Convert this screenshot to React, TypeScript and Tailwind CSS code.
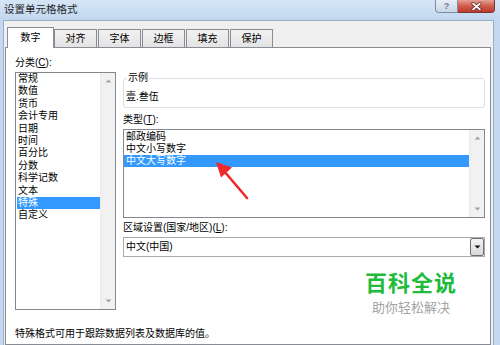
import React from "react";

function UpArrow() {
  return (
    <svg width="7" height="4" viewBox="0 0 7 4">
      <path d="M0.5 3.5 L3.5 0.5 L6.5 3.5 Z" fill="#a3a3a3" />
    </svg>
  );
}
function DownArrow({ color = "#a3a3a3" }: { color?: string }) {
  return (
    <svg width="7" height="4" viewBox="0 0 7 4">
      <path d="M0.5 0.5 L6.5 0.5 L3.5 3.5 Z" fill={color} />
    </svg>
  );
}

function ScrollBar({ pad }: { pad: string }) {
  return (
    <div className={`w-[15px] shrink-0 bg-[#f1f1f1] border-l border-[#ebebeb] flex flex-col items-center justify-between ${pad}`}>
      <UpArrow />
      <DownArrow />
    </div>
  );
}

export default function App() {
  const cats = ["常规", "数值", "货币", "会计专用", "日期", "时间", "百分比", "分数", "科学记数", "文本", "特殊", "自定义"];
  const types = ["邮政编码", "中文小写数字", "中文大写数字"];
  const tabs = ["对齐", "字体", "边框", "填充", "保护"];
  return (
    <div className="relative w-[500px] h-[345px] overflow-hidden bg-[#c4d9f1] font-['Liberation_Sans','Noto_Sans_CJK_SC',sans-serif] text-[10px] text-black flex flex-col">
      {/* title bar */}
      <div className="h-[20px] shrink-0 flex items-start bg-gradient-to-b from-[#d6e5f6] to-[#c1d7ef]">
        <span className="pl-[4px] pt-[3px] leading-[13px] text-[10.5px] text-[#1e1e1e]">设置单元格格式</span>
        <div className="ml-auto mr-[5px] flex">
          <div className="w-[23px] h-[13px] rounded-bl-[4px] border border-t-0 border-[#7d8ea6] bg-gradient-to-b from-[#e8eef6] to-[#c9d6e6] flex items-center justify-center text-[9px] leading-[11px] font-bold text-[#6a7a8e]">
            ?
          </div>
          <div className="w-[37px] h-[13px] rounded-br-[4px] border border-t-0 border-l-0 border-[#7a3a34] bg-gradient-to-b from-[#e5a194] via-[#cf5b4a] to-[#c0392b] flex items-center justify-center">
            <svg width="11" height="9" viewBox="0 0 11 9">
              <path d="M2 1.5 L9 7.5 M9 1.5 L2 7.5" stroke="#5a2019" strokeWidth="3.2" strokeLinecap="round" />
              <path d="M2 1.5 L9 7.5 M9 1.5 L2 7.5" stroke="#ffffff" strokeWidth="1.7" strokeLinecap="round" />
            </svg>
          </div>
        </div>
      </div>

      {/* body */}
      <div className="ml-[3px] w-[491px] flex-1 border-l border-t border-r border-[#9aaec6] bg-[#f0f0f0] flex flex-col pt-[6px]">
        {/* tabs */}
        <div className="h-[20px] shrink-0 flex items-end ml-[3px]">
          <div className="relative z-10 -mb-px w-[47px] h-[21px] bg-white border-l border-t border-r border-[#898c95] flex items-center justify-center leading-[14px]">
            数字
          </div>
          {tabs.map((t, i) => (
            <div
              key={t}
              className={`${i === 0 ? "" : "ml-[1px]"} w-[43px] h-[18px] border-l border-t border-r border-[#898c95] bg-gradient-to-b from-[#f2f2f2] to-[#e3e3e3] flex items-center justify-center leading-[14px]`}
            >
              {t}
            </div>
          ))}
        </div>

        {/* panel */}
        <div className="ml-[1px] w-[486px] flex-1 border border-[#898c95] bg-white pt-[8px] pl-[9px]">
          <div className="flex items-start">
            {/* left column */}
            <div className="w-[101px] flex flex-col">
              <div className="h-[14px] leading-[14px] mb-[2px]">
                分类(<span className="underline">C</span>):
              </div>
              <div className="h-[238px] border border-[#828790] flex">
                <div className="flex-1 pl-px flex flex-col">
                  {cats.map((c) => (
                    <div
                      key={c}
                      className={`h-[12.4px] leading-[12.4px] pl-[1px] whitespace-nowrap ${c === "特殊" ? "bg-[#3399ff] text-white" : ""}`}
                    >
                      {c}
                    </div>
                  ))}
                </div>
                <ScrollBar pad="py-[6px]" />
              </div>
            </div>

            {/* right column */}
            <div className="ml-[7px] w-[362px] flex flex-col">
              <fieldset className="mt-[15px] border border-[#d5dfe5] rounded-[3px] pl-[2px] pt-[5px] pb-[3px]">
                <legend className="ml-[1px] px-[1px] leading-[14px]">示例</legend>
                <div className="h-[14px] leading-[14px]">壹.叁伍</div>
              </fieldset>

              <div className="mt-[5px] h-[14px] leading-[14px] mb-[2px]">
                类型(<span className="underline">T</span>):
              </div>
              <div className="h-[89px] border border-[#828790] flex">
                <div className="flex-1 pt-[1px] flex flex-col">
                  {types.map((t) => (
                    <div
                      key={t}
                      className={`h-[12px] leading-[12px] pl-[2px] ${t === "中文大写数字" ? "bg-[#3399ff] text-white" : ""}`}
                    >
                      {t}
                    </div>
                  ))}
                </div>
                <ScrollBar pad="py-[6px]" />
              </div>

              <div className="mt-[3px] h-[14px] leading-[14px] mb-[2px]">
                区域设置(国家/地区)(<span className="underline">L</span>):
              </div>
              <div className="h-[20px] border border-[#a9abb0] flex items-center">
                <span className="flex-1 pl-[2px] leading-[14px]">中文(中国)</span>
                <div className="w-[14px] h-[18px] mr-0 border border-[#707070] rounded-[2px] bg-gradient-to-b from-[#f4f4f4] to-[#d9d9d9] flex items-center justify-center">
                  <DownArrow color="#111111" />
                </div>
              </div>

              <div className="self-end mr-[28px] mt-[15px] flex flex-col items-center">
                <div className="text-[22px] font-bold leading-[24px] text-[#1fbb3c] tracking-[1px]">百科全说</div>
                <div className="mt-[4px] text-[13px] leading-[16px] text-[#a3a3a3]">助你轻松解决</div>
              </div>
            </div>
          </div>

          <div className="mt-[11px] h-[14px] leading-[14px]">特殊格式可用于跟踪数据列表及数据库的值。</div>
        </div>
      </div>

      {/* red annotation arrow */}
      <svg className="absolute left-0 top-0 pointer-events-none" width="500" height="345" viewBox="0 0 500 345">
        <line x1="224" y1="171" x2="247" y2="198" stroke="#ee2a2a" strokeWidth="2.6" strokeLinecap="round" />
        <path d="M216 162 L232 167.5 L221 177.5 Z" fill="#ee2a2a" />
      </svg>
    </div>
  );
}
